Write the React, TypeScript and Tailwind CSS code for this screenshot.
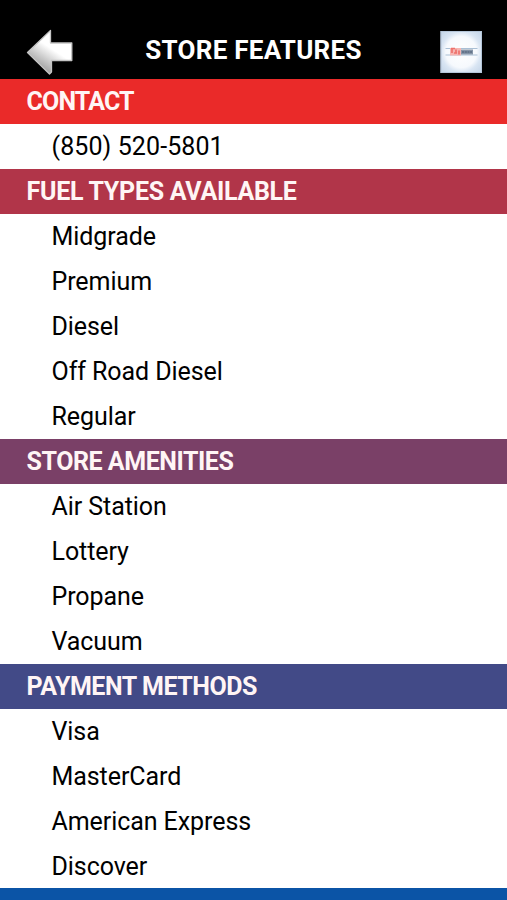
const sections = [
  { title: 'CONTACT', tone: 'bg-[#ea2a29]', spacing: 'tracking-[-0.85px]', items: ['(850) 520-5801'] },
  { title: 'FUEL TYPES AVAILABLE', tone: 'bg-[#b13549]', spacing: 'tracking-[-0.28px]', items: ['Midgrade', 'Premium', 'Diesel', 'Off Road Diesel', 'Regular'] },
  { title: 'STORE AMENITIES', tone: 'bg-[#7a4067]', spacing: 'tracking-[-0.45px]', items: ['Air Station', 'Lottery', 'Propane', 'Vacuum'] },
  { title: 'PAYMENT METHODS', tone: 'bg-[#424a87]', spacing: 'tracking-[-0.45px]', items: ['Visa', 'MasterCard', 'American Express', 'Discover'] },
];

function BackArrow() {
  return (
    <svg width="48" height="48" viewBox="0 0 48 48">
      <defs>
        <linearGradient id="metal" gradientUnits="userSpaceOnUse" x1="13" y1="37" x2="28" y2="14">
          <stop offset="0" stopColor="#a8a8a8" />
          <stop offset="0.35" stopColor="#d0d0d0" />
          <stop offset="0.75" stopColor="#fff" />
          <stop offset="1" stopColor="#fff" />
        </linearGradient>
      </defs>
      <path d="M1.5 24.5 L24.5 2.5 V15 H45.8 V32.5 H25.5 V44 L23.5 46 Z" fill="url(#metal)" stroke="#c5c5c5" strokeWidth="1.3" strokeLinejoin="round" />
    </svg>
  );
}

function StoreLogo() {
  return (
    <svg width="42" height="42" viewBox="0 0 42 42">
      <defs>
        <radialGradient id="glow" cx="0.5" cy="0.5" r="0.64">
          <stop offset="0" stopColor="#fff" />
          <stop offset="0.58" stopColor="#f6f9fd" />
          <stop offset="0.75" stopColor="#d9e5f3" />
          <stop offset="1" stopColor="#c8d8ea" />
        </radialGradient>
      </defs>
      <rect x="0.5" width="41.5" height="42" fill="url(#glow)" />
      <rect x="1" y="0.5" width="40.5" height="41" fill="none" stroke="#b5c6d9" />
      <path d="M5.5 17.5H37.5M5.5 24H37.5" stroke="#a9bfd5" strokeWidth="1.2" />
      <rect x="10" y="17" width="11" height="7.5" fill="#f6b5b2" />
      <rect x="21" y="18.5" width="12" height="5" fill="#8695a8" />
      <path d="M11 17.5h4M12 18v4M14 22h3M16 18.5v4M19 19.5v4" fill="none" stroke="#ee716c" strokeWidth="1.7" />
      <path d="M22 21h10" stroke="#65758b" strokeWidth="2" strokeDasharray="2.2 0.5" />
    </svg>
  );
}

export default function App() {
  return (
    <div className="flex h-[900px] w-full flex-col overflow-hidden bg-white font-[Roboto,sans-serif] text-[25px] text-black">
      <header className="flex h-[79px] shrink-0 items-start justify-between bg-black pl-[26px] pr-[25px] pt-7">
        <BackArrow />
        <h1 className="mr-[7px] pt-[3px] text-[26px] font-bold tracking-[0.25px] text-white">STORE FEATURES</h1>
        <div className="mt-[3px]"><StoreLogo /></div>
      </header>
      {sections.map((s) => (
        <section key={s.title} className="shrink-0 last-of-type:-mb-px">
          <h2 className={`${s.tone} ${s.spacing} h-[45px] pl-[26.5px] text-[25px] font-bold leading-[46px] text-[#fff5f5]`}>{s.title}</h2>
          {s.items.map((i) => (
            <p key={i} className={`h-[45px] pl-[51.5px] leading-[45px] ${i.startsWith('(') ? 'tracking-[0.1px]' : 'tracking-[-0.07px]'}`}>{i}</p>
          ))}
        </section>
      ))}
      <div className="h-3 shrink-0 bg-[#0b54a6]" />
    </div>
  );
}
